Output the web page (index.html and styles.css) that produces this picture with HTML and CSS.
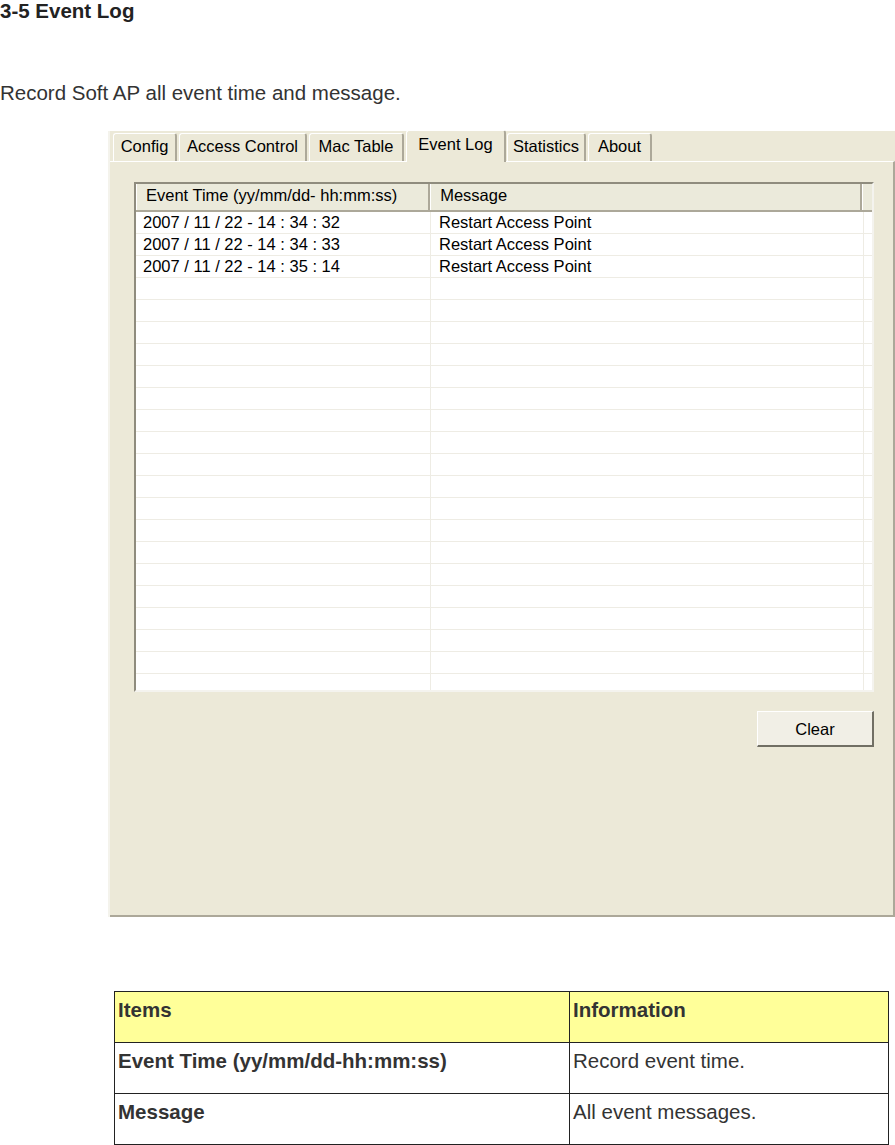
FILE: index.html
```html
<!DOCTYPE html>
<html lang="en">
<head>
    <meta charset="UTF-8">
    <meta name="viewport" content="width=device-width, initial-scale=1.0">
    <title>3-5 Event Log</title>
    <link rel="stylesheet" href="styles.css">
</head>
<body>
    <h1>3-5 Event Log</h1>
    <p class="lead">Record Soft AP all event time and message.</p>

    <!-- Soft AP utility window, Event Log tab -->
    <div class="window">
        <div class="tabs">
            <div class="tab config">Config</div>
            <div class="tab access">Access Control</div>
            <div class="tab mac">Mac Table</div>
            <div class="tab event active">Event Log</div>
            <div class="tab stats">Statistics</div>
            <div class="tab about">About</div>
        </div>
        <div class="page">
            <div class="listview">
                <div class="lv-head">
                    <div class="lv-col time">Event Time (yy/mm/dd- hh:mm:ss)</div>
                    <div class="lv-col msg">Message</div>
                    <div class="lv-col filler"></div>
                </div>
                <div class="lv-body" id="logRows">
                    <!-- rows are filled in by the script below -->
                </div>
            </div>
            <div class="actions">
                <button class="xp-button" onclick="clearLog()">Clear</button>
            </div>
        </div>
    </div>

    <table class="info">
        <thead>
            <tr>
                <th class="item">Items</th>
                <th>Information</th>
            </tr>
        </thead>
        <tbody>
            <tr>
                <td class="item">Event Time (yy/mm/dd-hh:mm:ss)</td>
                <td>Record event time.</td>
            </tr>
            <tr>
                <td class="item">Message</td>
                <td>All event messages.</td>
            </tr>
        </tbody>
    </table>

    <script>
        const events = [
            ['2007 / 11 / 22 - 14 : 34 : 32', 'Restart Access Point'],
            ['2007 / 11 / 22 - 14 : 34 : 33', 'Restart Access Point'],
            ['2007 / 11 / 22 - 14 : 35 : 14', 'Restart Access Point']
        ];
        const totalRows = 22; // list always shows empty grid lines below the events

        function renderLog(list) {
            const body = document.getElementById('logRows');
            body.innerHTML = '';
            for (let i = 0; i < totalRows; i++) {
                const row = document.createElement('div');
                row.className = 'lv-row';
                const entry = list[i] || ['', ''];
                row.innerHTML = '<div class="lv-cell time">' + entry[0] + '</div>' +
                                '<div class="lv-cell msg">' + entry[1] + '</div>' +
                                '<div class="lv-cell filler"></div>';
                body.appendChild(row);
            }
        }

        function clearLog() {
            renderLog([]);
        }

        renderLog(events);
    </script>
</body>
</html>
```

FILE: styles.css
```css
body {
    font-family: "Liberation Sans", Arial, sans-serif;
    color: #333;
    background-color: white;
    margin: 0;
    padding: 0;
}
h1 {
    font-size: 20.5px;
    line-height: 22px;
    margin: 0;
    color: #222;
}
.lead {
    font-size: 20.5px;
    line-height: 24px;
    margin: 59px 0 0;
}

/* window screenshot */
.window {
    margin: 26px 0 0 108px;
    width: 787px;
    height: 786px;
    background-color: #ECE9D8;
    border-left: 2px solid #F4F3EC;
    box-sizing: border-box;
    display: flex;
    flex-direction: column;
    font-size: 16.5px;
    color: #000;
}
.tabs {
    display: flex;
    align-items: flex-end;
    height: 30px;
    padding-left: 3px;
}
.tab {
    box-sizing: border-box;
    height: 28px;
    line-height: 24px;
    text-align: center;
    margin-right: 2px;
    border-top: 1px solid white;
    border-left: 1px solid white;
    border-right: 2px solid #ACA899;
    border-radius: 3px 3px 0 0;
    background-color: #ECE9D8;
    white-space: nowrap;
}
.config { width: 64px; }
.access { width: 128px; }
.mac { width: 95px; }
.event { width: 100px; }
.stats { width: 79px; }
.about { width: 64px; }
.tab.active {
    height: 32px;
    line-height: 26px;
    margin: 0 1px -1px 0;
    position: relative;
    z-index: 1;
}
.page {
    flex: 1;
    border-top: 1px solid white;
    border-right: 2px solid #ACA899;
    border-bottom: 2px solid #ACA899;
    padding: 20px 17px 0 24px;
}
.listview {
    width: 740px;
    height: 510px;
    box-sizing: border-box;
    background-color: white;
    border-top: 2px solid #8F8C7E;
    border-left: 2px solid #8F8C7E;
    border-right: 2px solid #F4F3EE;
    border-bottom: 2px solid #F4F3EE;
    overflow: hidden;
}
.lv-head {
    display: flex;
    height: 26px;
    background-color: #EBEADB;
    border-bottom: 2px solid #ACA899;
}
.lv-col {
    line-height: 23px;
    padding-left: 10px;
    box-sizing: border-box;
    border-right: 2px solid #ACA899;
    box-shadow: inset 1px 0 0 white;
    white-space: nowrap;
}
.time { width: 295px; }
.msg { width: 433px; }
.filler {
    flex: 1;
    border-right: none;
}
.lv-row {
    display: flex;
    height: 21px;
    border-bottom: 1px solid #EEECE4;
}
.lv-cell {
    line-height: 21px;
    padding-left: 7px;
    box-sizing: border-box;
    border-right: 1px solid #EEECE4;
    white-space: nowrap;
}
.lv-cell.msg { padding-left: 8px; }
.lv-cell.filler { border-right: none; }
.actions {
    display: flex;
    justify-content: flex-end;
    width: 740px;
    margin-top: 19px;
}
.xp-button {
    width: 117px;
    height: 36px;
    font-family: "Liberation Sans", Arial, sans-serif;
    font-size: 16.5px;
    line-height: 30px;
    color: #000;
    background-color: #F1EFE6;
    border-top: 1px solid white;
    border-left: 1px solid white;
    border-right: 2px solid #716F64;
    border-bottom: 2px solid #716F64;
    padding: 0;
    cursor: pointer;
}

/* description table */
.info {
    margin: 74px 0 0 114px;
    width: 775px;
    border-collapse: collapse;
    font-size: 20.5px;
}
.info th, .info td {
    border: 1px solid #222;
    height: 44px;
    padding: 6px 3px 0;
    text-align: left;
    vertical-align: top;
    font-weight: normal;
}
.info th {
    background-color: #FFFF99;
    font-weight: bold;
}
.info .item {
    width: 448px;
    font-weight: bold;
}
```
